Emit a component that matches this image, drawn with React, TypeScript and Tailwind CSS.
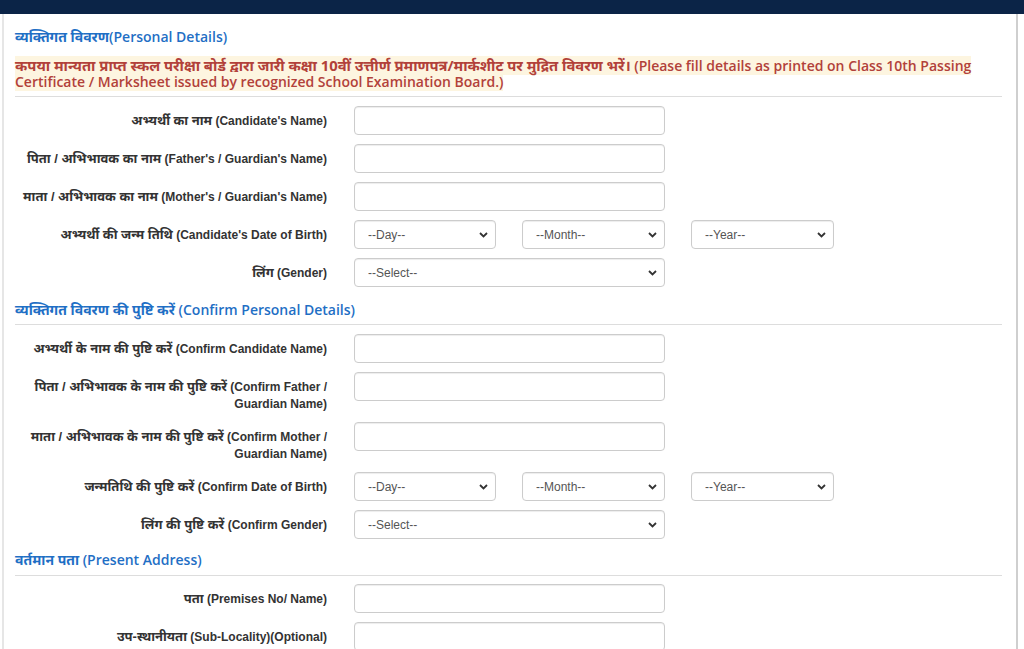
import React from "react";

const labelFont = {
  fontFamily: '"Liberation Sans", Arial, "Noto Sans Devanagari", "Lohit Devanagari", sans-serif',
};

const headFont = {
  fontFamily: '"Open Sans", "Noto Sans Devanagari", "Lohit Devanagari", sans-serif',
};

function Chevron() {
  return (
    <svg
      className="pointer-events-none absolute right-[8px] top-1/2 -translate-y-1/2"
      width="9"
      height="6"
      viewBox="0 0 9 6"
    >
      <path d="M1 1 L4.5 4.5 L8 1" fill="none" stroke="#333" strokeWidth="1.8" />
    </svg>
  );
}

function TextBox() {
  return (
    <input
      type="text"
      className="h-[29px] w-[311px] rounded-[4px] border border-[#ccc] bg-white shadow-[inset_0_1px_1px_rgba(0,0,0,0.075)] outline-none"
    />
  );
}

function SelectBox({ text, w }: { text: string; w: string }) {
  return (
    <div className={`relative h-[29px] ${w}`}>
      <select
        className="h-full w-full appearance-none rounded-[4px] border border-[#ccc] bg-white pl-[13px] text-[12px] text-[#555] shadow-[inset_0_1px_1px_rgba(0,0,0,0.075)] outline-none"
        style={labelFont}
        defaultValue=""
      >
        <option value="">{text}</option>
      </select>
      <Chevron />
    </div>
  );
}

function DateSelects() {
  return (
    <div className="flex gap-[26px]">
      <SelectBox text="--Day--" w="w-[142px]" />
      <SelectBox text="--Month--" w="w-[143px]" />
      <SelectBox text="--Year--" w="w-[143px]" />
    </div>
  );
}

function H({ children }: { children: React.ReactNode }) {
  return <span className="text-[13px] leading-none">{children}</span>;
}

function Row({
  label,
  children,
}: {
  label: React.ReactNode;
  children: React.ReactNode;
}) {
  return (
    <div className="mb-[9px] flex items-start">
      <div
        className="w-[312px] pt-[7px] text-right text-[12px] font-bold leading-[17px] text-[#333]"
        style={labelFont}
      >
        {label}
      </div>
      <div className="ml-[27px]">{children}</div>
    </div>
  );
}

function Heading({ hindi, eng }: { hindi: string; eng: string }) {
  return (
    <div className="h-[20px] text-[14px] leading-[20px] text-[#1f6fc5]" style={headFont}>
      <span className="font-bold">{hindi}</span>
      <span className="font-semibold">{eng}</span>
    </div>
  );
}

export default function App() {
  return (
    <div className="min-h-[649px] w-full bg-white">
      <div className="h-[14px] w-full bg-[#0b2447]" />
      <div className="ml-[2px] min-h-[635px] w-[1016px] border-l-2 border-r-2 border-l-[#e6e6e6] border-r-[#cfcfcf] pl-[11px] pr-[14px]">
        <div className="pt-[13px]">
          <Heading hindi="व्यक्तिगत विवरण" eng="(Personal Details)" />
        </div>
        <div className="mt-[11px] text-[14px] leading-[16px] text-[#b2413a]" style={headFont}>
          <span className="whitespace-nowrap bg-[#fdf5e0]">
            <span className="text-[14.8px] font-bold leading-none">
              कपया मान्यता प्राप्त स्कल परीक्षा बोर्ड द्वारा जारी कक्षा 10वीं उत्तीर्ण प्रमाणपत्र/मार्कशीट पर मुद्रित विवरण भरें।
            </span>
            <span className="font-semibold">
              {" "}
              (Please fill details as printed on Class 10th Passing
            </span>
          </span>
          <br />
          <span className="whitespace-nowrap bg-[#fdf5e0] font-semibold">
            Certificate / Marksheet issued by recognized School Examination Board.)
          </span>
        </div>
        <div className="mt-[6px] h-px w-full bg-[#ddd]" />

        <div className="mt-[9px]">
          <Row label={<><H>अभ्यर्थी का नाम</H> (Candidate's Name)</>}>
            <TextBox />
          </Row>
          <Row label={<><H>पिता / अभिभावक का नाम</H> (Father's / Guardian's Name)</>}>
            <TextBox />
          </Row>
          <Row label={<><H>माता / अभिभावक का नाम</H> (Mother's / Guardian's Name)</>}>
            <TextBox />
          </Row>
          <Row label={<><H>अभ्यर्थी की जन्म तिथि</H> (Candidate's Date of Birth)</>}>
            <DateSelects />
          </Row>
          <Row label={<><H>लिंग</H> (Gender)</>}>
            <SelectBox text="--Select--" w="w-[311px]" />
          </Row>
        </div>

        <div className="mt-[13px]">
          <Heading hindi="व्यक्तिगत विवरण की पुष्टि करें" eng=" (Confirm Personal Details)" />
        </div>
        <div className="mt-[4px] h-px w-full bg-[#ddd]" />

        <div className="mt-[9px]">
          <Row label={<><H>अभ्यर्थी के नाम की पुष्टि करें</H> (Confirm Candidate Name)</>}>
            <TextBox />
          </Row>
          <Row
            label={
              <>
                <H>पिता / अभिभावक के नाम की पुष्टि करें</H> (Confirm Father /
                <br />
                Guardian Name)
              </>
            }
          >
            <TextBox />
          </Row>
          <Row
            label={
              <>
                <H>माता / अभिभावक के नाम की पुष्टि करें</H> (Confirm Mother /
                <br />
                Guardian Name)
              </>
            }
          >
            <TextBox />
          </Row>
          <Row label={<><H>जन्मतिथि की पुष्टि करें</H> (Confirm Date of Birth)</>}>
            <DateSelects />
          </Row>
          <Row label={<><H>लिंग की पुष्टि करें</H> (Confirm Gender)</>}>
            <SelectBox text="--Select--" w="w-[311px]" />
          </Row>
        </div>

        <div className="mt-[11px]">
          <Heading hindi="वर्तमान पता" eng=" (Present Address)" />
        </div>
        <div className="mt-[5px] h-px w-full bg-[#ddd]" />

        <div className="mt-[8px]">
          <Row label={<><H>पता</H> (Premises No/ Name)</>}>
            <TextBox />
          </Row>
          <Row label={<><H>उप-स्थानीयता</H> (Sub-Locality)(Optional)</>}>
            <TextBox />
          </Row>
        </div>
      </div>
    </div>
  );
}
